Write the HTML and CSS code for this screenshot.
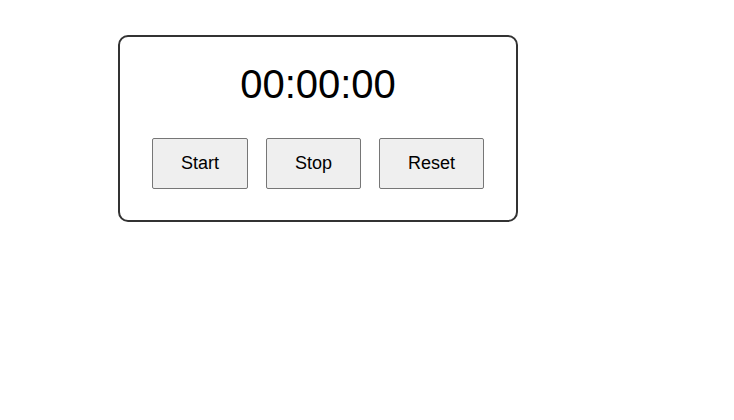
FILE: index.html
```html
<!DOCTYPE html>
<html>
<head>
<meta charset="utf-8">
<link rel="stylesheet" href="styles.css">
</head>
<body>
<div class="stopwatch">
  <div class="time">00:00:00</div>
  <div class="controls">
    <button class="btn">Start</button>
    <button class="btn">Stop</button>
    <button class="btn">Reset</button>
  </div>
</div>
</body>
</html>
```
FILE: styles.css
```css
body {
  margin: 8px;
  font-family: "Liberation Sans", Arial, sans-serif;
  background: #fff;
}
.stopwatch {
  box-sizing: border-box;
  width: 400px;
  height: 187px;
  margin: 27px 0 0 110px;
  border: 2px solid #333;
  border-radius: 10px;
  padding: 24px 0 0;
  display: flex;
  flex-direction: column;
  align-items: center;
}
.time {
  font-size: 40px;
  line-height: 46px;
  color: #000;
}
.controls {
  display: flex;
  gap: 18px;
  margin-top: 31px;
}
.btn {
  font-family: "Liberation Sans", Arial, sans-serif;
  font-size: 18px;
  line-height: 21px;
  padding: 14px 28px;
  background: #efefef;
  border: 1px solid #767676;
  border-radius: 2px;
  color: #000;
}
```
